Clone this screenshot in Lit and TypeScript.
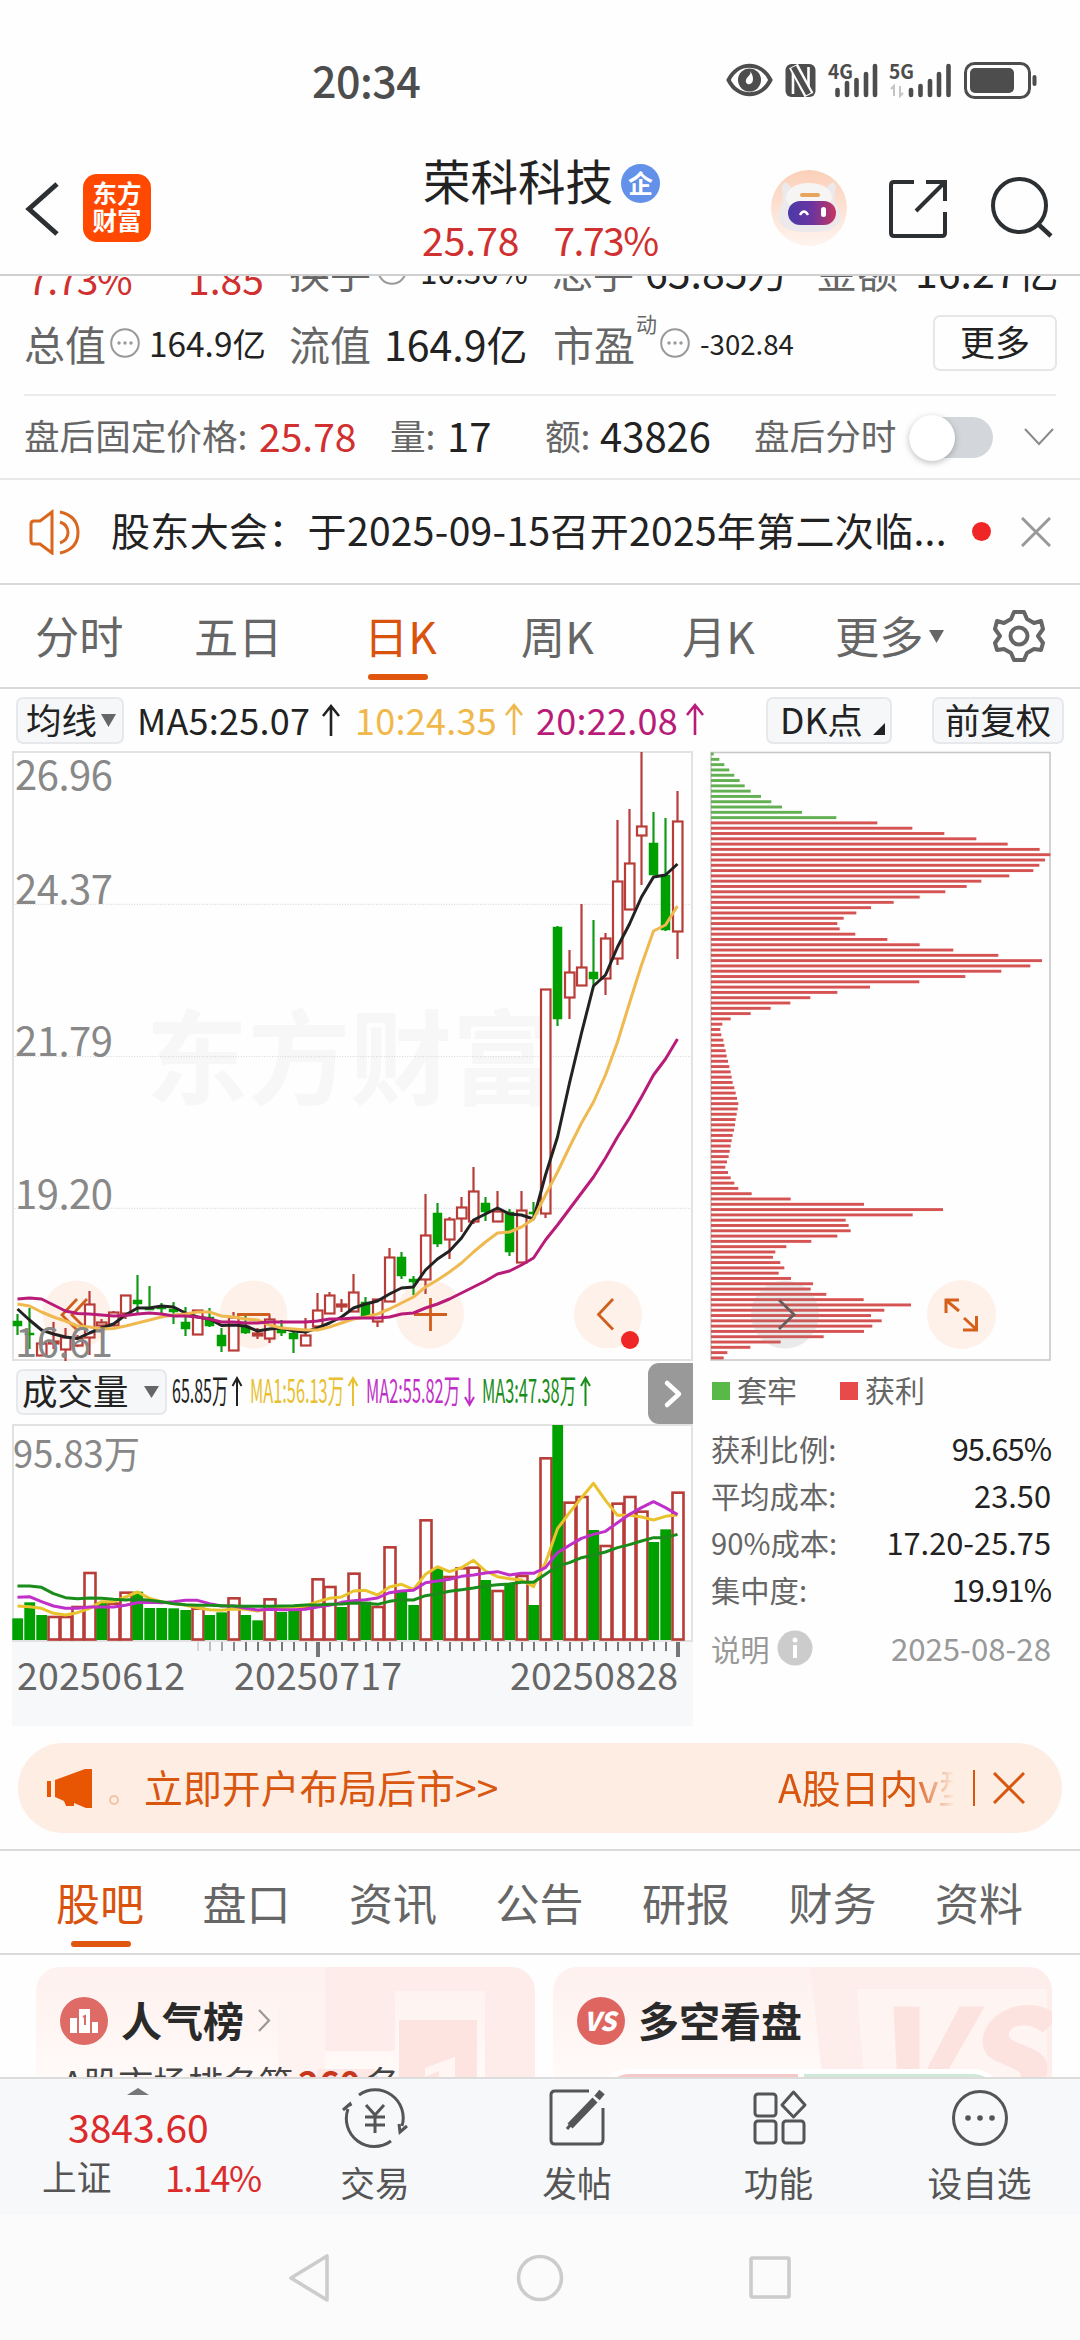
import { LitElement, html, svg, css } from "lit";
import { customElement } from "lit/decorators.js";

const base = css`
  :host { display: block; font-family: "Noto Sans CJK SC", "Noto Sans", sans-serif; color: #222; }
  * { box-sizing: border-box; }
  svg { display: block; }
  .red { color: #d0302f; }
  .gray { color: #666; }
`;

const STEP = 12;
const X0 = 17.5;
const px = (i: number) => X0 + i * STEP;
const line = (ys: number[]) => ys.map((y, i) => `${px(i)},${y}`).join(" ");

/* colour, body top, body bottom, high, low */
type Candle = [string, number, number, number, number];
const candles: Candle[] = [
  ["g", 1321, 1326, 1314, 1335], ["g", 1333, 1335, 1308, 1349], ["r", 1343, 1355, 1337, 1355], ["r", 1341, 1343, 1322, 1349],
  ["r", 1337, 1349, 1328, 1361], ["r", 1338, 1345, 1335, 1347], ["r", 1304, 1337, 1291, 1355], ["r", 1322, 1325, 1319, 1328],
  ["r", 1312, 1325, 1311, 1325], ["r", 1295, 1313, 1295, 1319], ["g", 1300, 1304, 1275, 1313], ["g", 1308, 1310, 1286, 1310],
  ["g", 1307, 1309, 1303, 1313], ["g", 1309, 1312, 1302, 1324], ["g", 1322, 1329, 1307, 1336], ["r", 1310, 1334, 1310, 1334],
  ["g", 1317, 1326, 1308, 1327], ["g", 1335, 1346, 1328, 1352], ["r", 1317, 1350, 1312, 1350], ["g", 1326, 1333, 1313, 1334],
  ["r", 1333, 1335, 1328, 1339], ["r", 1319, 1338, 1314, 1343], ["g", 1328, 1333, 1320, 1336], ["g", 1333, 1339, 1330, 1353],
  ["r", 1335, 1345, 1318, 1345], ["r", 1310, 1326, 1293, 1326], ["r", 1295, 1313, 1292, 1313], ["r", 1304, 1306, 1299, 1312],
  ["r", 1292, 1311, 1274, 1311], ["g", 1302, 1317, 1297, 1317], ["r", 1299, 1321, 1299, 1327], ["r", 1257, 1301, 1248, 1301],
  ["g", 1257, 1276, 1252, 1279], ["g", 1279, 1282, 1276, 1295], ["r", 1235, 1279, 1194, 1294], ["g", 1213, 1244, 1203, 1247],
  ["r", 1219, 1239, 1217, 1259], ["r", 1207, 1218, 1197, 1232], ["r", 1191, 1221, 1167, 1224], ["g", 1203, 1212, 1197, 1221],
  ["r", 1211, 1221, 1191, 1221], ["g", 1212, 1252, 1209, 1256], ["r", 1210, 1262, 1191, 1262], ["g", 1212, 1214, 1202, 1218],
  ["r", 989, 1213, 989, 1218], ["g", 927, 1019, 926, 1026], ["r", 972, 997, 950, 1019], ["r", 967, 985, 904, 985],
  ["g", 972, 979, 920, 985], ["r", 938, 978, 933, 995], ["r", 881, 958, 820, 965], ["r", 863, 909, 809, 909],
  ["r", 826, 835, 752, 885], ["g", 843, 875, 812, 875], ["g", 875, 930, 818, 931], ["r", 821, 931, 791, 959],
];
const ma5 = [1309, 1320, 1330, 1334, 1337, 1338.5, 1333, 1328, 1324, 1315, 1308, 1308, 1306, 1307, 1313, 1317, 1319, 1325.5, 1325, 1326, 1331, 1329, 1328, 1331, 1332, 1328, 1323, 1317, 1308, 1304, 1301, 1294, 1288, 1287, 1270, 1259, 1251, 1238, 1220, 1214, 1208, 1214, 1215, 1219, 1175, 1137, 1083, 1033, 986, 975, 947, 924, 897, 877, 875, 864];
const ma10 = [1304, 1306, 1312, 1317, 1321, 1326, 1327, 1329, 1328.5, 1326, 1323, 1320, 1317, 1315, 1314, 1312, 1312, 1316, 1317, 1319, 1320, 1325, 1328, 1329, 1330, 1330, 1327, 1323, 1319, 1317, 1314, 1309, 1303, 1297, 1287, 1280, 1272, 1263, 1252, 1242, 1233, 1232, 1227, 1219, 1195, 1172, 1147, 1123, 1102, 1075, 1042, 1003, 965, 931, 925, 906];
const ma20 = [1299, 1298, 1299, 1305, 1311, 1313.5, 1314, 1315, 1316, 1315.5, 1314, 1313, 1314, 1316, 1316, 1317, 1319, 1322, 1322, 1323, 1323, 1322, 1322, 1322, 1322, 1321, 1319, 1319, 1318, 1318, 1318, 1317, 1314, 1313, 1308, 1304, 1299, 1293, 1287, 1281, 1274, 1271, 1265, 1258, 1240, 1225, 1209, 1193, 1177, 1158, 1137, 1118, 1097, 1075, 1059, 1039];

@customElement("kline-chart")
class KlineChart extends LitElement {
  static styles = [base, css`
    .label { font-size: 40px; fill: #888; }
    .mark { font-size: 103px; font-weight: 700; fill: #f7f7f7; }
    .up { fill: #fff; stroke: #b83c38; stroke-width: 2.2; }
    .down { fill: #00a000; stroke: #00a000; stroke-width: 0.5; }
    .wr { stroke: #b83c38; stroke-width: 2.2; }
    .wg { stroke: #119a18; stroke-width: 2.2; }
    .ma { fill: none; stroke-width: 3; stroke-linejoin: round; }
    .frame { fill: none; stroke: #e2e2e2; stroke-width: 2; }
    .grid { stroke: #d4d4d4; stroke-dasharray: 1 1.6; }
    .disc { fill: #fef1ea; }
    .glyph { fill: none; stroke: #cf5f1c; stroke-width: 2.8; }
  `];
  render() {
    return html`<svg width="700" height="611" viewBox="0 751 700 611">
      <text class="mark" x="146" y="1097" textLength="408" lengthAdjust="spacingAndGlyphs">东方财富</text>
      ${[904.3, 1056.6, 1208.3].map((y) => svg`<line class="grid" x1="12" x2="692" y1=${y} y2=${y}/>`)}
      <rect class="frame" x="13" y="752" width="679" height="608"/>
      ${[76.5, 253.5, 430, 608].map((x) => svg`<circle class="disc" cx=${x} cy="1314.5" r="34"/>`)}
      ${candles.map(([c, t, b, h, l], i) => {
        const x = px(i);
        return c === "g"
          ? svg`<line class="wg" x1=${x} x2=${x} y1=${h} y2=${l}/><rect class="down" x=${x - 4.5} y=${t} width="9" height=${b - t}/>`
          : svg`<line class="wr" x1=${x} x2=${x} y1=${h} y2=${t}/><line class="wr" x1=${x} x2=${x} y1=${b} y2=${l}/><rect class="up" x=${x - 4.5} y=${t + 0.5} width="9.5" height=${Math.max(1, b - t)}/>`;
      })}
      <g class="glyph">
        <path d="M77 1299L62 1315L77 1330M87 1299L72 1315L87 1330"/>
        <path d="M237 1314.5h33"/>
        <path d="M414 1314.5h33M430.5 1298v33"/>
        <path d="M613 1299L598.500 1314.500L613 1329.500"/>
      </g>
      <polyline class="ma" stroke="#222" points=${line(ma5)}/>
      <polyline class="ma" stroke="#efb950" points=${line(ma10)}/>
      <polyline class="ma" stroke="#b81c78" points=${line(ma20)}/>
      <circle cx="630" cy="1340" r="9" fill="#f02525"/>
      ${([["26.96", 790], ["24.37", 904], ["21.79", 1056], ["19.20", 1209], ["16.61", 1357]] as [string, number][]).map(
        ([t, y]) => svg`<text class="label" x="15" y=${y} textLength="98">${t}</text>`)}
    </svg>`;
  }
}

const volumes: [string, number][] = [
  ["g", 772], ["g", 724], ["g", 762], ["r", 768], ["r", 768], ["r", 738], ["r", 636], ["g", 724], ["r", 728], ["r", 695], ["g", 692], ["g", 741], ["g", 741], ["g", 742], ["g", 747], ["r", 743],
  ["g", 762], ["g", 754], ["r", 712], ["g", 762], ["g", 778], ["r", 715], ["g", 753], ["g", 750], ["r", 740], ["r", 655], ["r", 678], ["g", 738], ["r", 638], ["g", 722], ["r", 738], ["r", 559],
  ["g", 692], ["g", 732], ["r", 478], ["g", 622], ["r", 648], ["r", 622], ["r", 620], ["g", 657], ["r", 690], ["g", 668], ["r", 645], ["g", 732], ["r", 292], ["g", 192], ["r", 425], ["r", 408],
  ["g", 507], ["r", 555], ["r", 428], ["r", 408], ["r", 452], ["g", 543], ["g", 505], ["r", 395],
];
const vy = (v: number) => 1360 + v / 3;
const vma1 = [735, 737, 742, 757, 762, 755, 742, 722, 722, 708, 693, 712, 722, 727, 733, 740, 746, 748, 744, 745, 750, 743, 740, 738, 735, 722, 712, 708, 690, 688, 702, 678, 670, 685, 640, 617, 632, 620, 598, 630, 647, 653, 657, 677, 605, 503, 455, 410, 367, 418, 463, 463, 468, 477, 466, 462].map(vy);
const vma2 = [709, 707, 722, 735, 742, 742, 738, 738, 738, 733, 725, 724, 725, 722, 718, 718, 728, 735, 735, 742, 747, 745, 746, 746, 745, 738, 733, 724, 719, 716, 711, 695, 690, 688, 665, 660, 655, 646, 642, 636, 632, 642, 637, 637, 620, 575, 553, 532, 520, 511, 485, 460, 440, 422, 440, 461].map(vy);
const vma3 = [675, 675, 679, 698, 710, 713, 711, 712, 715, 717, 715, 718, 722, 728, 731, 733, 733, 734, 735, 736, 736, 736, 735, 734, 732, 732, 730, 729, 726, 727, 730, 721, 716, 717, 704, 698, 691, 686, 681, 675, 671, 669, 664, 664, 640, 615, 605, 590, 582, 573, 560, 551, 540, 530, 530, 520].map(vy);
const ticks = Array.from({ length: 41 }, (_, k) => 198 + 12 * k);

@customElement("volume-chart")
class VolumeChart extends LitElement {
  static styles = [base, css`
    .head { display: flex; align-items: center; height: 62px; padding-left: 16px; }
    .pick { display: flex; align-items: center; gap: 15px; width: 151px; height: 46px; margin-bottom: 2px; padding-left: 4px; border: 2px solid #e6e8ec; border-radius: 7px; background: #f6f7f9; font-size: 35.5px; line-height: 40px; }
    .pick span { padding-bottom: 5px; }
    .next { width: 45px; height: 61px; border-radius: 11px 0 0 11px; background: #999; }
    .stat { font-size: 33px; }
    .label { font-size: 38px; fill: #888; }
    .date { font-size: 37.5px; fill: #666; }
    .up { fill: #fff; stroke: #b83c38; stroke-width: 2.6; }
    .down { fill: #00a000; }
    .ma { fill: none; stroke-width: 3; stroke-linejoin: round; }
    .frame { fill: none; stroke: #e2e2e2; stroke-width: 2; }
    .arrow { fill: none; stroke-width: 2; }
  `];
  private stat(x: number, w: number, color: string, text: string, ax: number, up: boolean) {
    return svg`<text class="stat" x=${x} y="33" fill=${color} textLength=${w} lengthAdjust="spacingAndGlyphs">${text}</text>
      <path class="arrow" stroke=${color} d=${up ? `M${ax} 36V9M${ax - 4.5} 16L${ax} 8L${ax + 4.5} 16` : `M${ax} 8V34M${ax - 4.5} 27L${ax} 35L${ax + 4.5} 27`}/>`;
  }
  render() {
    return html`
      <div class="head">
        <div class="pick"><span>成交量</span><svg width="16" height="12"><path d="M0 0h15l-7.500 12z" fill="#666"/></svg></div>
        <svg width="481" height="46" viewBox="167 0 481 46">
          ${this.stat(172, 56, "#222", "65.85万", 237, true)}
          ${this.stat(250, 94, "#e8c030", "MA1:56.13万", 353, true)}
          ${this.stat(366, 94, "#c030c8", "MA2:55.82万", 469.5, false)}
          ${this.stat(482, 94, "#1a8c1a", "MA3:47.38万", 585.5, true)}
        </svg>
        <div class="next"><svg width="45" height="61"><path d="M19 20L31 31L19 42" fill="none" stroke="#fff" stroke-width="4.500" stroke-linecap="round" stroke-linejoin="round"/></svg></div>
      </div>
      <svg width="700" height="302" viewBox="0 1423 700 302">
        <rect x="12" y="1641" width="681" height="84" fill="#f7f8fa"/>
        <rect class="frame" x="13" y="1424" width="679" height="216"/>
        <text class="label" x="13" y="1467" textLength="127" lengthAdjust="spacingAndGlyphs">95.83万</text>
        ${volumes.map(([c, v], i) => {
          const x = px(i), y = vy(v);
          return c === "g"
            ? svg`<rect class="down" x=${x - 5.2} y=${y} width="10.8" height=${1639 - y}/>`
            : svg`<rect class="up" x=${x - 5} y=${y} width="11" height=${1638.5 - y}/>`;
        })}
        <polyline class="ma" stroke="#e9c22c" points=${line(vma1)}/>
        <polyline class="ma" stroke="#c030c8" points=${line(vma2)}/>
        <polyline class="ma" stroke="#1a8c1a" points=${line(vma3)}/>
        ${ticks.map((x, k) => x === 318 || x === 678
          ? svg`<line x1=${x} x2=${x} y1="1641" y2="1656" stroke="#777" stroke-width="4"/>`
          : svg`<line x1=${x} x2=${x} y1="1641" y2="1650" stroke="#777" stroke-width="2" opacity=${Math.min(1, 0.25 + k * 0.2)}/>`)}
        ${([["20250612", 17], ["20250717", 234], ["20250828", 510]] as [string, number][]).map(
          ([t, x]) => svg`<text class="date" x=${x} y="1689" textLength="168">${t}</text>`)}
      </svg>`;
  }
}

const chips = [40, 57, 72, 87, 102, 118, 133, 151, 182, 213, 245, 305, 408, 531, 636, 732, 828, 922, 1018, 1050, 1034, 1017, 999, 927, 843, 799, 735, 658, 580, 512, 468, 430, 411, 418, 465, 561, 658, 759, 894, 1025, 990, 903, 795, 657, 509, 411, 330, 270, 211, 151, 91, 66, 60, 63, 69, 72, 76, 79, 83, 87, 91, 94, 97, 102, 106, 110, 114, 112, 109, 106, 104, 101, 97, 94, 91, 88, 85, 80, 75, 83, 91, 102, 114, 154, 271, 491, 728, 637, 436, 445, 451, 411, 333, 258, 225, 218, 240, 252, 235, 272, 338, 331, 378, 490, 632, 552, 512, 544, 516, 491, 370, 241, 150, 81, 70];

@customElement("chip-panel")
class ChipPanel extends LitElement {
  static styles = [base, css`
    .legend { display: grid; grid-template-columns: 25px 103px 25px 1fr; align-items: center; height: 57px; padding-left: 12px; font-size: 30px; line-height: 44px; color: #666; }
    .legend span { padding-bottom: 4px; }
    .sq { width: 18px; height: 18px; }
    .g { background: #58b848; }
    .r { background: #e84a4a; }
    .rows { margin-top: 5px; }
    .row { display: flex; justify-content: space-between; align-items: center; height: 47.1px; padding: 0 29px 0 11px; font-size: 29.3px; line-height: 40px; color: #666; }
    .val { color: #222; font-size: 30.8px; }
    .pc { letter-spacing: -1px; }
    .foot { margin-top: 12px; color: #999; }
    .when { font-size: 31.2px; }
    .note { display: flex; align-items: center; gap: 7px; }
  `];
  render() {
    const rows = [["获利比例:", "95.65%"], ["平均成本:", "23.50"], ["90%成本:", "17.20-25.75"], ["集中度:", "19.91%"]];
    return html`
      <svg width="380" height="611" viewBox="700 751 380 611">
        <rect x="711" y="752.5" width="339" height="607.500" fill="none" stroke="#c8c8c8" stroke-width="1.600"/>
        <circle cx="785" cy="1314.500" r="34" fill="#f3f3f3"/>
        ${chips.map((e, i) => svg`<rect x="711" y=${752.6 + i * 5.297} width=${(e - 32) / 3} height="2.9" fill=${i < 13 ? "#62b052" : "#d55353"}/>`)}
        <circle cx="785" cy="1314.500" r="34" fill="#999" opacity="0.1"/>
        <path d="M779 1300L794 1314.500L779 1329" fill="none" stroke="#6b5a5a" stroke-width="2.800"/>
        <circle cx="961.500" cy="1314.500" r="34.500" fill="#fef1ea"/>
        <path d="M959 1300h-13v13M947 1301l12 10M964 1318l12 11M963 1330h13.500v-14" fill="none" stroke="#d4601a" stroke-width="3"/>
      </svg>
      <div class="legend"><div class="sq g"></div><span>套牢</span><div class="sq r"></div><span>获利</span></div>
      <div class="rows">${rows.map(([k, v]) => html`<div class="row"><span>${k}</span><span class="val ${v.endsWith("%") ? "pc" : ""}">${v}</span></div>`)}</div>
      <div class="row foot">
        <div class="note"><span>说明</span><svg width="36" height="36"><circle cx="18" cy="18" r="17.500" fill="#ccc"/><circle cx="18" cy="10" r="2.500" fill="#fff"/><path d="M18 15v13" stroke="#fff" stroke-width="4"/></svg></div>
        <span class="when">2025-08-28</span>
      </div>`;
  }
}

const dots = html`<svg width="30" height="32" viewBox="0 0 30 32"><circle cx="15" cy="16" r="13.800" fill="none" stroke="#999" stroke-width="2"/><circle cx="9" cy="16" r="1.700" fill="#999"/><circle cx="15" cy="16" r="1.700" fill="#999"/><circle cx="21" cy="16" r="1.700" fill="#999"/></svg>`;
const arrowUp = html`<svg width="20" height="34" viewBox="0 0 20 34"><path d="M10 33V4M2 13L10 3L18 13" fill="none" stroke="currentColor" stroke-width="2.600"/></svg>`;

@customElement("app-root")
class AppRoot extends LitElement {
  static styles = [base, css`
    :host { width: 1080px; height: 2340px; overflow: hidden; background: #fefefe; }
    .page { display: flex; flex-direction: column; height: 2340px; }
    .page > * { flex: none; }
    .status { display: flex; justify-content: space-between; height: 130px; padding: 0 43px 0 311px; }
    .clock { margin: 49px 0 0 1px; font-size: 43px; line-height: 60px; font-weight: 500; color: #4d4d4d; letter-spacing: -0.5px; }
    .sysicons { margin-top: 58px; overflow: visible; }
    .header { display: grid; grid-template-columns: 83px 341px 346px 117px 103px 1fr; height: 146px; border-bottom: 2px solid #d0d0d0; }
    .back { margin: 50px 0 0 24px; }
    .logo { width: 68px; height: 68px; margin-top: 44px; border-radius: 14px; background: #ff4800; color: #fff; font-size: 24.5px; line-height: 27px; font-weight: 700; text-align: center; padding-top: 5px; }
    .name { display: flex; align-items: center; gap: 8px; margin: 17px 0 0 -1px; height: 66px; font-size: 47.5px; line-height: 66px; }
    .badge { width: 39px; height: 39px; border-radius: 50%; background: #6390e8; color: #fff; font-size: 25px; line-height: 36px; font-weight: 700; text-align: center; margin-top: 6px; }
    .px { display: flex; gap: 34px; margin: 1px 0 0 -2px; font-size: 39px; line-height: 50px; color: #d0302f; }
    .pct { letter-spacing: -1.5px; }
    .quotes { height: 118px; overflow: hidden; }
    .q1, .q2 { display: grid; align-items: center; white-space: nowrap; font-size: 41px; }
    .q1 { grid-template-columns: 161px 101px 88px 43px 132px 93px 171px 99px 1fr; height: 60px; line-height: 60px; margin-top: -44px; padding-left: 27px; }
    .q1 .low { margin-top: 16px; font-size: 39px; }
    .q2 { grid-template-columns: 86px 39px 140px 95px 169px 83px 24px 40px 233px 1fr; height: 64px; line-height: 64px; margin-top: 19px; padding-left: 24px; }
    .s34 { font-size: 33.4px; }
    .s31 { font-size: 31.5px; }
    .s27 { font-size: 27.6px; }
    .tiny { font-size: 21px; margin-top: -40px; color: #666; }
    .more { width: 124px; height: 56px; border: 2px solid #e6e6e6; border-radius: 7px; text-align: center; font-size: 35px; line-height: 48px; }
    .rule { height: 2px; margin: 0 24px; background: #ececec; }
    .after { display: grid; grid-template-columns: 235px 131px 57px 98px 55px 154px 155px 115px 1fr; align-items: center; height: 84px; padding-left: 24px; font-size: 35.6px; line-height: 60px; white-space: nowrap; color: #666; border-bottom: 2px solid #e8e8e8; }
    .after span, .after b { padding-bottom: 4px; }
    .after b { font-weight: 400; font-size: 40px; color: #222; }
    .after b.red { color: #d0302f; font-size: 39px; }
    .toggle { width: 84px; height: 41px; border-radius: 21px; background: #d3d7dc; }
    .knob { width: 46px; height: 46px; margin-top: -2px; border-radius: 50%; background: #fff; box-shadow: 0 2px 6px rgba(0, 0, 0, 0.25); }
    .notice { display: grid; grid-template-columns: 83px 861px 49px 1fr; align-items: center; height: 105px; padding-left: 28px; font-size: 39px; line-height: 60px; letter-spacing: 0.32px; white-space: nowrap; border-bottom: 2px solid #dadada; }
    .notice span { padding-bottom: 5px; }
    .dot { width: 19px; height: 19px; border-radius: 50%; background: #f02525; }
    .period { display: grid; grid-template-columns: 159px 170px 157px 161px 153px 94px 64px 1fr; align-items: center; height: 104px; padding-left: 35px; font-size: 44.2px; line-height: 60px; color: #666; border-bottom: 2px solid #dadada; }
    .period span { padding-bottom: 2px; }
    .on { color: #d9530f; }
    .under { position: relative; }
    .under::after { content: ""; position: absolute; left: 4px; bottom: -13px; width: 60px; height: 6px; border-radius: 3px; background: #e0560e; }
    .tools { display: grid; grid-template-columns: 108px 13px 184px 34px 149px 32px 149px 81px 166px 1fr; align-items: center; height: 62px; padding-left: 16px; font-size: 36px; line-height: 44px; white-space: nowrap; }
    .tools > span, .lift { padding-bottom: 3px; }
    .num { letter-spacing: 0.25px; }
    .chip { display: flex; align-items: center; height: 47px; border: 2px solid #e6e8ec; border-radius: 7px; background: #f6f7f9; font-size: 35.5px; }
    .chip.a { gap: 4px; padding-left: 8px; }
    .chip.b { width: 126px; gap: 10px; padding-left: 12px; }
    .chip.c { width: 132px; justify-content: center; }
    .tri { margin-top: 17px; }
    .gold { color: #f0b84a; }
    .plum { color: #b81c78; }
    .charts { display: grid; grid-template-columns: 700px 380px; height: 974px; }
    .banner { display: grid; grid-template-columns: 62px 36px 634px 195px 20px 1fr; align-items: center; width: 1044px; height: 90px; margin: 18px 18px 0; padding-left: 28px; border-radius: 45px; background: #fdede3; color: #d9560f; font-size: 38.9px; line-height: 60px; white-space: nowrap; }
    .banner span { padding-bottom: 4px; }
    .fade { -webkit-mask-image: linear-gradient(90deg, #000 74%, transparent 98%); mask-image: linear-gradient(90deg, #000 74%, transparent 98%); overflow: hidden; width: 180px; }
    .bar { width: 2px; height: 36px; background: #d9560f; }
    .sections { display: grid; grid-template-columns: repeat(7, 146.500px); align-items: center; height: 106px; margin-top: 16px; padding-left: 56px; font-size: 44px; line-height: 60px; color: #666; border-top: 2px solid #dadada; border-bottom: 2px solid #dadada; }
    .sections .under::after { left: 15px; bottom: -15px; }
    .cards { display: grid; grid-template-columns: 499px 499px; gap: 18px; height: 122px; padding: 12px 36px 0; overflow: hidden; }
    .card { position: relative; height: 170px; border-radius: 24px; overflow: hidden; background: linear-gradient(180deg, #fef1ef, #fff9f7 60%); }
    .art { position: absolute; right: 0; top: 0; }
    .ttl { position: relative; display: flex; align-items: center; gap: 13px; height: 60px; margin: 24px 0 0 24px; font-size: 41px; line-height: 56px; font-weight: 700; color: #2a2a2a; }
    .ttl span { padding-bottom: 5px; }
    .rank { position: relative; margin: 6px 0 0 26px; font-size: 35px; line-height: 50px; color: #444; }
    .rank b { margin: 0 5px; color: #c8371c; }
    .poll { position: absolute; left: 46px; top: 102px; display: flex; gap: 6px; padding: 5px; border-radius: 30px; background: #fff; }
    .poll div { width: 194px; height: 50px; }
    .pr { background: #f5c9c7; border-radius: 25px 0 0 25px; }
    .pg { background: #cfe9d8; border-radius: 0 25px 25px 0; }
    .dock { display: grid; grid-template-columns: 274px 202px 202px 201px 201px; height: 138px; background: #f7f8fa; border-top: 2px solid #dcdcdc; font-size: 34.7px; line-height: 44px; color: #555; }
    .idx { display: grid; grid-template-columns: 123px 1fr; padding: 9px 0 0 42px; align-content: start; }
    .idx .caret { grid-column: 1 / 3; margin-left: 85px; }
    .idx .total { grid-column: 1 / 3; margin: 6px 0 0 26px; font-size: 39px; line-height: 50px; color: #dc2b2b; }
    .idx .pct { color: #dc2b2b; font-size: 36px; margin-top: -4px; }
    .idx .row2 { margin-top: -2px; line-height: 54px; }
    .item { display: flex; flex-direction: column; align-items: center; padding-top: 9px; }
    .item span { margin-top: 9px; line-height: 50px; }
    .nav { display: grid; grid-template-columns: 228px 232px 1fr; align-items: center; height: 126px; padding: 0 0 0 287px; background: #fbfbfb; }
  `];

  render() {
    return html`<div class="page">
      <div class="status">
        <div class="clock">20:34</div>
        <svg class="sysicons" width="312" height="44" viewBox="724 58 312 44" fill="#4d4d4d">
          <path d="M727.500 80C737 61 760 61 769.500 80C760 99 737 99 727.500 80Z" fill="none" stroke="#4d4d4d" stroke-width="4"/>
          <circle cx="748.500" cy="80" r="11.500"/><path d="M749 71c2 4-3 5-4 9c-1 3 2 5 4 4c4-1 4-8 0-13z" fill="#fefefe"/>
          <rect x="784.500" y="64" width="30" height="33" rx="6"/>
          <path d="M792 67v27M807.500 67v27" stroke="#fefefe" stroke-width="2.600"/>
          <path d="M792.500 66L808 95" stroke="#fefefe" stroke-width="10"/><path d="M792.500 67L807.500 94" stroke="#4d4d4d" stroke-width="5.500"/>
          <text x="827" y="79" font-size="20" font-weight="700" textLength="25" lengthAdjust="spacingAndGlyphs">4G</text>
          <path d="M836.500 90v5M846 83v12M855.500 80v15M865 74v21M874 66v29" stroke="#4d4d4d" stroke-width="4.600" stroke-linecap="round"/>
          <text x="888" y="79" font-size="20" font-weight="700" textLength="25" lengthAdjust="spacingAndGlyphs">5G</text>
          <path d="M893 96V86l-3 3M899 86v10l3-3" stroke="#c4c4c4" stroke-width="2" fill="none"/>
          <path d="M910 90v5M919.500 86v9M929 81v14M938 74v21M947.500 66v29" stroke="#4d4d4d" stroke-width="4.600" stroke-linecap="round"/>
          <rect x="964.500" y="63.500" width="64" height="34" rx="9" fill="none" stroke="#4d4d4d" stroke-width="3"/>
          <rect x="969" y="68" width="44" height="25" rx="5"/><rect x="1031.500" y="75" width="4" height="11" rx="2"/>
        </svg>
      </div>
      <div class="header">
        <svg class="back" width="38" height="58"><path d="M33 4L5 29L33 54" fill="none" stroke="#2d3033" stroke-width="5"/></svg>
        <div class="logo">东方<br>财富</div>
        <div>
          <div class="name">荣科科技<div class="badge">企</div></div>
          <div class="px"><span>25.78</span><span class="pct">7.73%</span></div>
        </div>
        <svg width="78" height="144" viewBox="769 130 78 144">
          <defs>
            <linearGradient id="halo" x1="0" y1="0" x2="0" y2="1"><stop offset="0" stop-color="#fbcfb8"/><stop offset="1" stop-color="#fef4ef"/></linearGradient>
            <linearGradient id="visor"><stop offset="0" stop-color="#4a3aa8"/><stop offset="0.5" stop-color="#6a35a0"/><stop offset="1" stop-color="#c8355f"/></linearGradient>
          </defs>
          <circle cx="808" cy="208" r="38" fill="url(#halo)"/>
          <path d="M781 186q2-6 6-2l5 5h32l5-5q4-4 6 2l-2 14 6 12q2 12-4 14q-6 6-27 6q-20 0-26-6q-6-4-4-15l4-11z" fill="#ece9ec"/>
          <ellipse cx="808" cy="197" rx="23" ry="14" fill="#f7f4f4"/>
          <rect x="799" y="193" width="20" height="4" rx="2" fill="#e8a55c"/>
          <rect x="787" y="201" width="48" height="24" rx="12" fill="url(#visor)"/>
          <path d="M799 215q4-7 8 0" fill="none" stroke="#fff" stroke-width="2.500"/><rect x="820" y="207" width="5" height="10" rx="2.500" fill="#fff"/>
        </svg>
        <svg width="60" height="144" viewBox="885 130 60 144" fill="none" stroke="#2d3033" stroke-width="4">
          <path d="M912 182H892q-3 0-3 3v48q0 3 3 3h48q3 0 3-3V212M924 182h19v19M943 182L914 211"/>
        </svg>
        <svg width="64" height="144" viewBox="989 130 64 144" fill="none" stroke="#2d3033" stroke-width="4"><circle cx="1018.500" cy="205.500" r="26.500"/><path d="M1037 224L1050 236" stroke-width="4.500"/></svg>
      </div>

      <div class="quotes">
        <div class="q1"><span class="low red pct">7.73%</span><span class="low red">1.85</span><span class="gray">换手</span>${dots}<span class="s31">10.30%</span><span class="gray">总手</span><span>65.85万</span><span class="gray">金额</span><span>16.27亿</span></div>
        <div class="q2"><span class="gray">总值</span>${dots}<span class="s34">164.9亿</span><span class="gray">流值</span><span>164.9亿</span><span class="gray">市盈</span><span class="tiny">动</span>${dots}<span class="s27">-302.84</span><div class="more">更多</div></div>
      </div>
      <div class="rule"></div>
      <div class="after"><span>盘后固定价格:</span><b class="red">25.78</b><span>量:</span><b>17</b><span>额:</span><b>43826</b><span>盘后分时</span><div class="toggle"><div class="knob"></div></div>
        <svg width="30" height="20"><path d="M1 2L15 17L29 2" fill="none" stroke="#8a8a8a" stroke-width="2"/></svg></div>
      <div class="notice">
        <svg width="54" height="46" viewBox="28 508 54 46" fill="none" stroke="#d9671f" stroke-width="3"><path d="M52 511L40 520H34q-3 0-3 3v17q0 3 3 3h6l12 9zM60 511q18 4 18 20.500T60 552M60 521q8 3 8 10.500T60 542"/></svg>
        <span>股东大会：于2025-09-15召开2025年第二次临...</span><div class="dot"></div>
        <svg width="30" height="30"><path d="M1 1L29 29M29 1L1 29" stroke="#999" stroke-width="3"/></svg>
      </div>
      <div class="period"><span>分时</span><span>五日</span><span class="on under">日K</span><span>周K</span><span>月K</span><span>更多</span>
        <svg width="16" height="13"><path d="M0 0h15l-7.500 13z" fill="#666"/></svg>
        <svg width="52" height="54" viewBox="-26 -27 52 54" fill="none" stroke="#666" stroke-width="4" stroke-linejoin="round"><path d="M-5 -24H5L8 -17L15 -13L22 -15L24 -7L19 0L24 7L22 14L15 13L8 17L5 24H-5L-8 17L-15 13L-22 14L-24 7L-19 0L-24 -7L-22 -15L-15 -13L-8 -17Z"/><circle r="8.500"/></svg>
      </div>
      <div class="tools">
        <div class="chip a"><span class="lift">均线</span><svg width="16" height="13"><path d="M0 0h15l-7.500 13z" fill="#666"/></svg></div><i></i>
        <span class="num">MA5:25.07</span>${arrowUp}<span class="gold num">10:24.35</span><span class="gold">${arrowUp}</span><span class="plum num">20:22.08</span><span class="plum">${arrowUp}</span>
        <div class="chip b"><span class="lift">DK点</span><svg class="tri" width="12" height="12"><path d="M12 0v12H0z" fill="#222"/></svg></div>
        <div class="chip c"><span class="lift">前复权</span></div>
      </div>
      <div class="charts"><div><kline-chart></kline-chart><volume-chart></volume-chart></div><chip-panel></chip-panel></div>

      <div class="banner">
        <svg width="48" height="42" viewBox="47 1766 48 42" fill="#e85604"><path d="M48 1780h4v16h-4zM56 1779L86 1768h7v39h-6l-12-5v3h-8l-2-5l-9-4z"/></svg>
        <svg width="12" height="60"><circle cx="6" cy="42" r="4" fill="none" stroke="#f3c3a5" stroke-width="2"/></svg>
        <span>立即开户布局后市&gt;&gt;</span><span class="fade">A股日内v型</span><div class="bar"></div>
        <svg width="32" height="32"><path d="M1 1L31 31M31 1L1 31" stroke="#d9560f" stroke-width="3"/></svg>
      </div>
      <div class="sections"><span class="on under">股吧</span><span>盘口</span><span>资讯</span><span>公告</span><span>研报</span><span>财务</span><span>资料</span></div>
      <div class="cards">
        <div class="card">
          <svg class="art" width="260" height="170"><path d="M50 0h210v170h-50V24h-90v60H50z" fill="#fdecea"/><rect x="3" y="32" width="47" height="140" fill="#fef3f0"/><path d="M124 53h78v117h-78z" fill="#fde4e1"/><path d="M42 102h58v70H42z" fill="#fde8e5"/><path d="M180 90v40h-16v-26l-14 6v-9z" fill="#fff6f4"/></svg>
          <div class="ttl"><svg width="48" height="48"><circle cx="24" cy="24" r="24" fill="#df6b66"/><path d="M10 21h7v15h-7zM19 12h11v24H19zM32 25h6v11h-6z" fill="#fff"/><path d="M23 20l2-1v9" fill="none" stroke="#df6b66" stroke-width="2"/></svg><span>人气榜</span><svg width="15" height="26"><path d="M2 2L12 12.500L2 23" fill="none" stroke="#999" stroke-width="2.200"/></svg></div>
          <div class="rank">A股市场排名第<b>260</b>名</div>
        </div>
        <div class="card">
          <svg class="art" width="245" height="170"><path d="M3 0h242v170H22z" fill="#fdeeec"/><path d="M50 22h190v150H62z" fill="#fef4f1"/><text x="62" y="138" font-size="132" font-weight="900" font-style="italic" fill="#fde3e0" textLength="175" lengthAdjust="spacingAndGlyphs">VS</text></svg>
          <div class="poll"><div class="pr"></div><div class="pg"></div></div>
          <div class="ttl"><svg width="48" height="48"><circle cx="24" cy="24" r="24" fill="#df6560"/><text x="7" y="34" font-size="26" font-weight="900" font-style="italic" fill="#fff" textLength="32" lengthAdjust="spacingAndGlyphs">VS</text></svg><span>多空看盘</span></div>
        </div>
      </div>

      <div class="dock">
        <div class="idx"><svg class="caret" width="22" height="7"><path d="M0 7L11 0L22 7z" fill="#777"/></svg><div class="total">3843.60</div><div class="row2">上证</div><div class="row2 pct">1.14%</div></div>
        <div class="item"><svg width="66" height="60" viewBox="-33 -30 66 60" fill="none" stroke="#555" stroke-width="3"><path d="M-16 -23A28 28 0 0 1 27 8M16 23A28 28 0 0 1 -27 -9M-32 -8L-25 -14L-24 -12M32 8L25 14L24 6"/><path d="M-9 -13L0 -3L9 -13M0 -3V15M-10 -1H10M-10 7H10"/></svg><span>交易</span></div>
        <div class="item"><svg width="60" height="60" viewBox="-30 -30 60 60" fill="none" stroke="#555" stroke-width="3"><path d="M12 -27H-22q-4 0-4 4V22q0 4 4 4H22q4 0 4-4V-10"/><path d="M18 -18L-7 8" stroke-width="7"/><path d="M-5 5L-10 11" stroke-width="3"/><path d="M20 -20L25 -26" stroke-width="7"/></svg><span>发帖</span></div>
        <div class="item"><svg width="60" height="60" viewBox="-30 -30 60 60" fill="none" stroke="#555" stroke-width="3"><rect x="-24" y="-24" width="21" height="22" rx="3"/><rect x="-24" y="3" width="21" height="22" rx="3"/><rect x="4" y="3" width="21" height="22" rx="3"/><path d="M14.500 -26L26 -13L14.500 -1L3 -13Z" stroke-linejoin="round"/></svg><span>功能</span></div>
        <div class="item"><svg width="60" height="60" viewBox="-30 -30 60 60"><circle r="26.500" fill="none" stroke="#555" stroke-width="3"/><g fill="#555"><circle cx="-12" r="2.800"/><circle r="2.800"/><circle cx="12" r="2.800"/></g></svg><span>设自选</span></div>
      </div>
      <div class="nav">
        <svg width="46" height="50"><path d="M40 3V47L4 25Z" fill="none" stroke="#ccc" stroke-width="3.600" stroke-linejoin="round"/></svg>
        <svg width="50" height="50"><circle cx="25" cy="25" r="21.500" fill="none" stroke="#ccc" stroke-width="3.600"/></svg>
        <svg width="46" height="46"><rect x="4" y="3" width="38" height="39" rx="1" fill="none" stroke="#ccc" stroke-width="3.600"/></svg>
      </div>
    </div>`;
  }
}
